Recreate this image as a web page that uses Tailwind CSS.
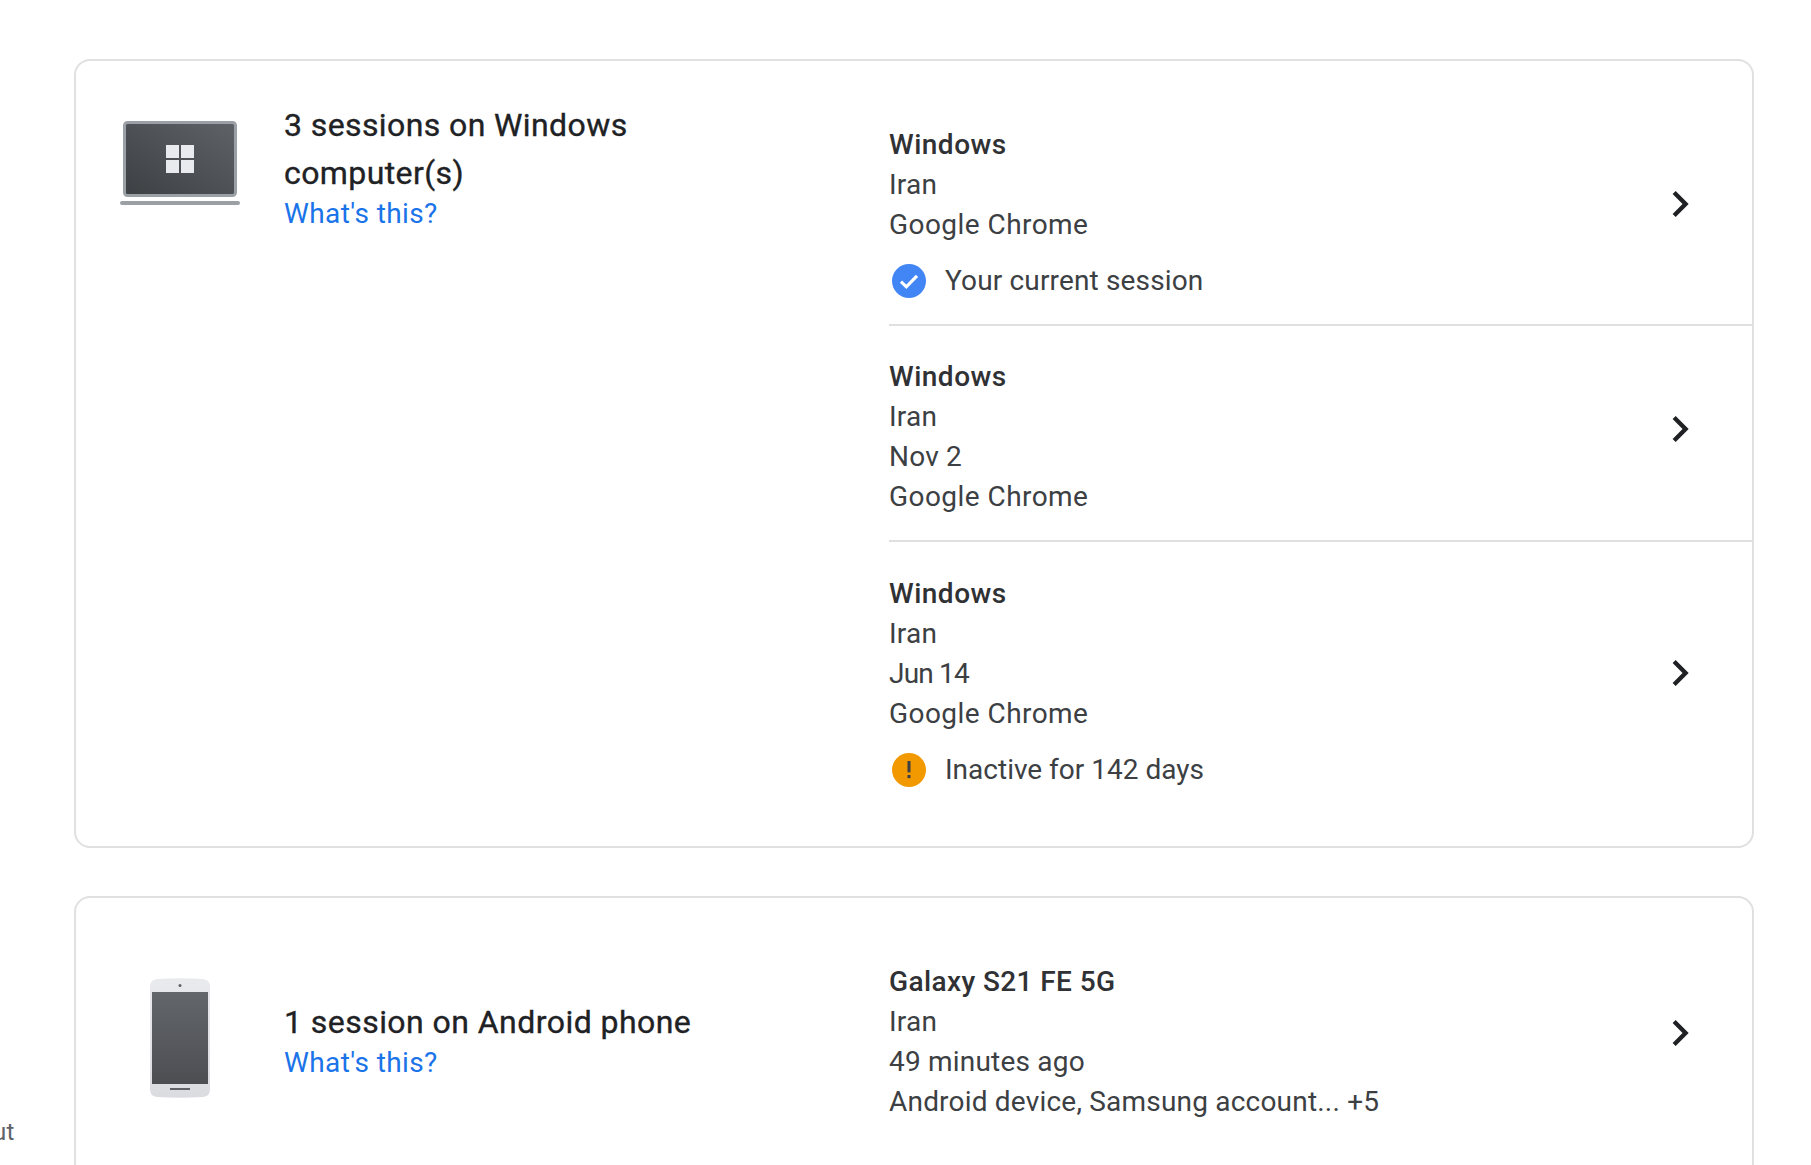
<!DOCTYPE html>
<html lang="en">
<head>
    <meta charset="UTF-8">
    <meta name="viewport" content="width=device-width, initial-scale=1.0">
    <title>Your devices</title>
    <script src="https://cdn.jsdelivr.net/npm/@tailwindcss/browser@4"></script>
</head>
<body class="bg-white h-screen overflow-hidden flex font-['Roboto',sans-serif] text-[#3c4043] text-[28px] leading-[40px] tracking-[0.2px]">
    <!-- Sidebar tail -->
    <div class="w-[74px] shrink-0 pt-[1112px] text-[24px] text-[#5f6368] overflow-hidden"><span class="block -ml-[7px]">ut</span></div>

    <!-- Main Content -->
    <div class="w-[1680px] shrink-0 h-screen overflow-hidden pt-[60px] flex flex-col gap-[48px]">
        <!-- Windows sessions -->
        <div class="border-2 border-[#e0e0e0] rounded-[16px] h-[789px] shrink-0 flex -mt-px">
            <div class="w-[813px] shrink-0 flex pl-[44px] pt-[40px]">
                <svg width="120" height="120" viewBox="0 0 120 120" class="shrink-0">
                    <defs>
                        <linearGradient id="laptopScreen" x1="0" y1="1" x2="1" y2="0">
                            <stop offset="0" stop-color="#3c4043"/>
                            <stop offset="1" stop-color="#5f6368"/>
                        </linearGradient>
                    </defs>
                    <rect x="4.5" y="21.5" width="111" height="73" rx="3" fill="url(#laptopScreen)" stroke="#9aa0a6" stroke-width="3"/>
                    <rect x="46" y="44" width="13" height="13" fill="#e8eaed"/>
                    <rect x="61" y="44" width="13" height="13" fill="#e8eaed"/>
                    <rect x="46" y="59" width="13" height="13" fill="#e8eaed"/>
                    <rect x="61" y="59" width="13" height="13" fill="#e8eaed"/>
                    <rect x="0" y="100" width="120" height="4" rx="2" fill="#9aa0a6"/>
                </svg>
                <div class="ml-[44px] w-[400px]">
                    <h2 class="text-[32px] leading-[48px] tracking-[0.4px] text-[#202124] [-webkit-text-stroke:0.35px_#202124]">3 sessions on Windows computer(s)</h2>
                    <a href="#" class="block text-[#1a73e8] tracking-[0.4px] -mt-[3px]">What's this?</a>
                </div>
            </div>
            <div class="flex-1 flex flex-col">
                <div class="flex items-center pt-[64px] pb-[23px] border-b-2 border-[#e0e0e0]">
                    <div class="flex-1">
                        <div class="font-medium tracking-[0.5px] text-[#303134]">Windows</div>
                        <div>Iran</div>
                        <div class="tracking-[0.45px]">Google Chrome</div>
                        <div class="flex items-center mt-[16px]">
                            <svg width="40" height="40" viewBox="0 0 24 24" class="mr-[16px]">
                                <circle cx="12" cy="12" r="10.2" fill="#4285f4"/>
                                <path d="M7.2 12.4l3.2 3.1 6.4-6.6" fill="none" stroke="#fff" stroke-width="1.9"/>
                            </svg>
                            <span class="tracking-[0.15px]">Your current session</span>
                        </div>
                    </div>
                    <svg width="52" height="52" viewBox="0 0 24 24" class="mr-[46px] mb-[18px]">
                        <path d="M10 6L8.59 7.41 13.17 12l-4.58 4.59L10 18l6-6z" fill="#202124"/>
                    </svg>
                </div>
                <div class="flex items-center pt-[31px] pb-[23px] border-b-2 border-[#e0e0e0]">
                    <div class="flex-1">
                        <div class="font-medium tracking-[0.5px] text-[#303134]">Windows</div>
                        <div>Iran</div>
                        <div>Nov 2</div>
                        <div class="tracking-[0.45px]">Google Chrome</div>
                    </div>
                    <svg width="52" height="52" viewBox="0 0 24 24" class="mr-[46px] mb-[16px]">
                        <path d="M10 6L8.59 7.41 13.17 12l-4.58 4.59L10 18l6-6z" fill="#202124"/>
                    </svg>
                </div>
                <div class="flex items-center pt-[32px]">
                    <div class="flex-1">
                        <div class="font-medium tracking-[0.5px] text-[#303134]">Windows</div>
                        <div>Iran</div>
                        <div class="tracking-[-0.8px]">Jun 14</div>
                        <div class="tracking-[0.45px]">Google Chrome</div>
                        <div class="flex items-center mt-[16px]">
                            <svg width="40" height="40" viewBox="0 0 24 24" class="mr-[16px]">
                                <circle cx="12" cy="12" r="10.2" fill="#f29900"/>
                                <rect x="11.1" y="6.6" width="1.8" height="6.8" fill="#3c4043"/>
                                <rect x="11.1" y="15" width="1.8" height="1.9" fill="#3c4043"/>
                            </svg>
                            <span class="tracking-[0px]">Inactive for 142 days</span>
                        </div>
                    </div>
                    <svg width="52" height="52" viewBox="0 0 24 24" class="mr-[46px] mb-[18px]">
                        <path d="M10 6L8.59 7.41 13.17 12l-4.58 4.59L10 18l6-6z" fill="#202124"/>
                    </svg>
                </div>
            </div>
        </div>

        <!-- Android sessions -->
        <div class="border-2 border-[#e0e0e0] rounded-[16px] h-[400px] shrink-0 flex">
            <div class="w-[813px] shrink-0 flex items-center h-[284px] pl-[44px]">
                <svg width="120" height="120" viewBox="0 0 120 120" class="shrink-0 mb-[4px]">
                    <defs>
                        <linearGradient id="phoneBody" x1="0" y1="0" x2="0" y2="1">
                            <stop offset="0" stop-color="#e8eaed"/>
                            <stop offset="1" stop-color="#dadce0"/>
                        </linearGradient>
                        <linearGradient id="phoneScreen" x1="0" y1="0" x2="0" y2="1">
                            <stop offset="0" stop-color="#63666a"/>
                            <stop offset="1" stop-color="#4c4e52"/>
                        </linearGradient>
                    </defs>
                    <path d="M30 9Q30 1.5 37 1Q60 -0.5 83 1Q90 1.5 90 9V111Q90 118.5 83 119Q60 120.5 37 119Q30 118.5 30 111Z" fill="url(#phoneBody)"/>
                    <rect x="32" y="14" width="56" height="92" fill="url(#phoneScreen)"/>
                    <circle cx="60" cy="7.5" r="1.5" fill="#5f6368"/>
                    <rect x="50" y="110" width="20" height="2" fill="#5f6368"/>
                </svg>
                <div class="ml-[44px]">
                    <h2 class="text-[32px] leading-[48px] tracking-[0.45px] text-[#202124] [-webkit-text-stroke:0.35px_#202124]">1 session on Android phone</h2>
                    <a href="#" class="block text-[#1a73e8] tracking-[0.4px] -mt-[3px]">What's this?</a>
                </div>
            </div>
            <div class="flex-1 flex flex-col">
                <div class="flex items-center pt-[64px]">
                    <div class="flex-1">
                        <div class="font-medium tracking-[0.4px] text-[#303134]">Galaxy S21 FE 5G</div>
                        <div>Iran</div>
                        <div>49 minutes ago</div>
                        <div>Android device, Samsung account... +5</div>
                    </div>
                    <svg width="52" height="52" viewBox="0 0 24 24" class="mr-[46px] mb-[18px]">
                        <path d="M10 6L8.59 7.41 13.17 12l-4.58 4.59L10 18l6-6z" fill="#202124"/>
                    </svg>
                </div>
            </div>
        </div>
    </div>
</body>
</html>
